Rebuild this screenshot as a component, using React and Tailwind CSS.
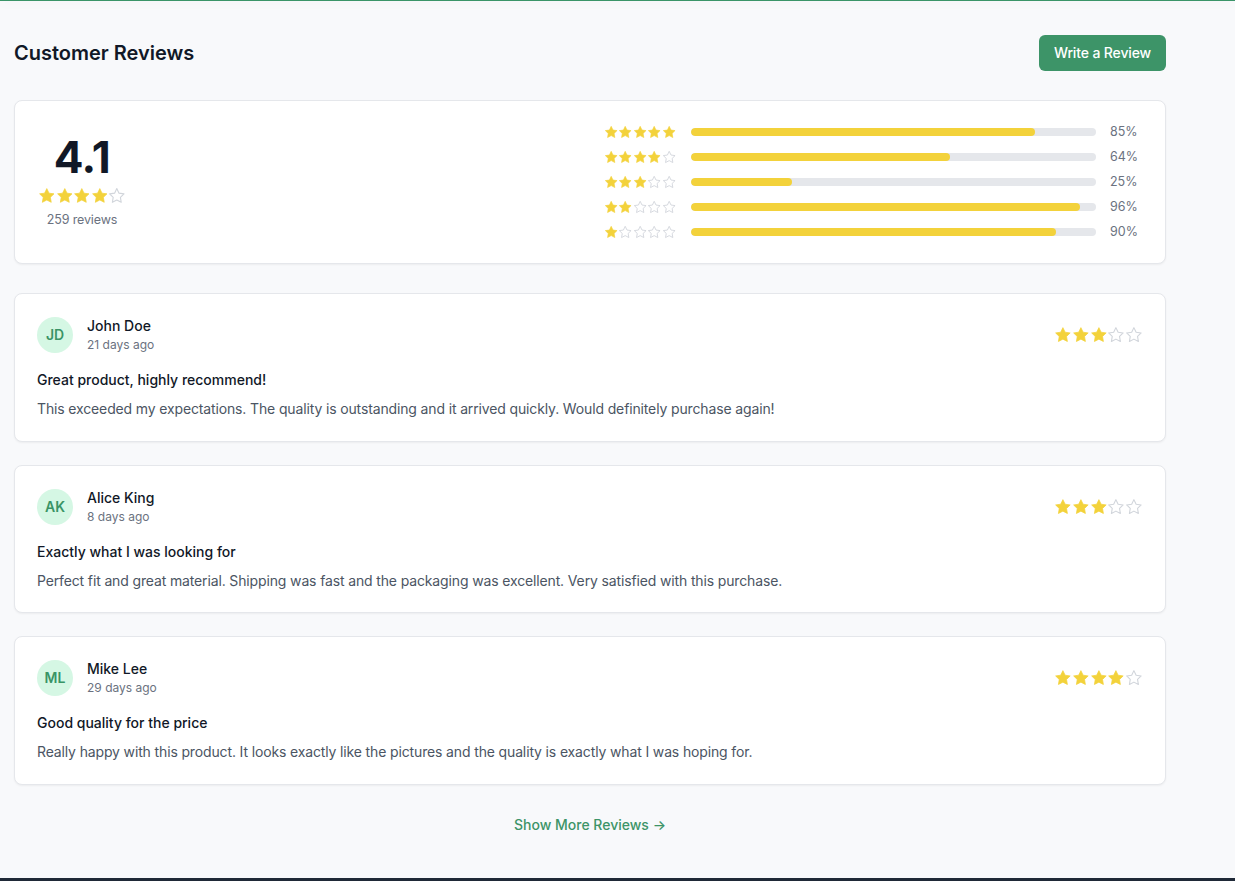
import React from "react";

const YELLOW = "#f3d23b";

function Star({ filled, size }) {
  return (
    <svg width={size} height={size} viewBox="0 0 24 24" className="block shrink-0">
      <polygon
        points="12,2.2 15.0,8.4 21.8,9.35 16.9,14.1 18.05,20.9 12,17.7 5.95,20.9 7.1,14.1 2.2,9.35 9.0,8.4"
        fill={filled ? YELLOW : "none"}
        stroke={filled ? YELLOW : "#d1d5db"}
        strokeWidth={filled ? 1 : 1.5}
        strokeLinejoin="round"
      />
    </svg>
  );
}

function Stars({ count, size }) {
  return (
    <div className="flex">
      {[0, 1, 2, 3, 4].map((i) => (
        <Star key={i} filled={i < count} size={size} />
      ))}
    </div>
  );
}

const dist = [
  { stars: 5, pct: 85 },
  { stars: 4, pct: 64 },
  { stars: 3, pct: 25 },
  { stars: 2, pct: 96 },
  { stars: 1, pct: 90 },
];

const reviews = [
  {
    initials: "JD",
    name: "John Doe",
    date: "21 days ago",
    rating: 3,
    title: "Great product, highly recommend!",
    body: "This exceeded my expectations. The quality is outstanding and it arrived quickly. Would definitely purchase again!",
  },
  {
    initials: "AK",
    name: "Alice King",
    date: "8 days ago",
    rating: 3,
    title: "Exactly what I was looking for",
    body: "Perfect fit and great material. Shipping was fast and the packaging was excellent. Very satisfied with this purchase.",
  },
  {
    initials: "ML",
    name: "Mike Lee",
    date: "29 days ago",
    rating: 4,
    title: "Good quality for the price",
    body: "Really happy with this product. It looks exactly like the pictures and the quality is exactly what I was hoping for.",
  },
];

export default function App() {
  return (
    <div
      className="min-h-screen bg-[#f8f9fb] flex flex-col"
      style={{ fontFamily: "Inter, 'Noto Sans', sans-serif" }}
    >
      <div className="h-px bg-[#3a9468] shadow-[0_2px_10px_rgba(0,0,0,0.1)] relative z-10" />
      <main className="ml-[14px] w-[1152px] pt-[34px]">
        <div className="h-9 flex items-center justify-between">
          <h2 className="text-[20px] font-semibold text-[#111827] leading-7">Customer Reviews</h2>
          <button className="h-9 px-[15px] rounded-md bg-[#3d9468] text-white text-sm font-medium tracking-[-0.01em]">
            Write a Review
          </button>
        </div>

        <div className="mt-[29px] bg-white border border-[#e5e7eb] rounded-lg shadow-[0_1px_2px_rgba(0,0,0,0.05)] px-5 py-[21px] flex justify-between items-center">
          <div className="w-[94px] flex flex-col items-center">
            <div className="text-[44px] font-bold leading-none text-[#111827] tracking-[-0.01em]">4.1</div>
            <div className="mt-[8px]">
              <Stars count={4} size={17.6} />
            </div>
            <div className="mt-[6px] text-[12.5px] leading-[18px] text-[#6b7280] tracking-[-0.01em]">259 reviews</div>
          </div>
          <div className="w-[541px] flex flex-col gap-[5px]">
            {dist.map((d) => (
              <div key={d.stars} className="h-5 flex items-center">
                <div className="w-[72px]">
                  <Stars count={d.stars} size={14.4} />
                </div>
                <div className="ml-[15px] flex-1 h-2 rounded-full bg-[#e5e7eb] overflow-hidden">
                  <div className="h-full rounded-full bg-[#f3d23b]" style={{ width: `${d.pct}%` }} />
                </div>
                <div className="ml-[14px] w-[35px] text-[12.5px] text-[#6b7280]">{d.pct}%</div>
              </div>
            ))}
          </div>
        </div>

        <div className="mt-[29px] flex flex-col gap-[23px]">
          {reviews.map((r) => (
            <div
              key={r.name}
              className="bg-white border border-[#e5e7eb] rounded-lg shadow-[0_1px_2px_rgba(0,0,0,0.05)] pt-[22px] px-[22px] pb-[20.5px]"
            >
              <div className="flex items-center justify-between">
                <div className="flex items-center gap-3.5">
                  <div className="w-9 h-9 rounded-full bg-[#d5f7e4] flex items-center justify-center text-sm font-semibold text-[#3a9466]">
                    {r.initials}
                  </div>
                  <div>
                    <div className="text-sm font-medium text-[#111827] leading-5">{r.name}</div>
                    <div className="text-xs text-[#6b7280] leading-[18px]">{r.date}</div>
                  </div>
                </div>
                <Stars count={r.rating} size={17.8} />
              </div>
              <div className="mt-4 text-sm font-medium text-[#111827] leading-5">{r.title}</div>
              <p className="mt-2 text-sm text-[#4b5563] leading-[22px] tracking-[-0.01em]">{r.body}</p>
            </div>
          ))}
        </div>

        <div className="mt-[30px] flex justify-center">
          <button className="text-sm font-medium text-[#3d9468] leading-5">Show More Reviews →</button>
        </div>
      </main>
      <div className="mt-[43px] h-[200px] bg-[#1f2937]" />
    </div>
  );
}
